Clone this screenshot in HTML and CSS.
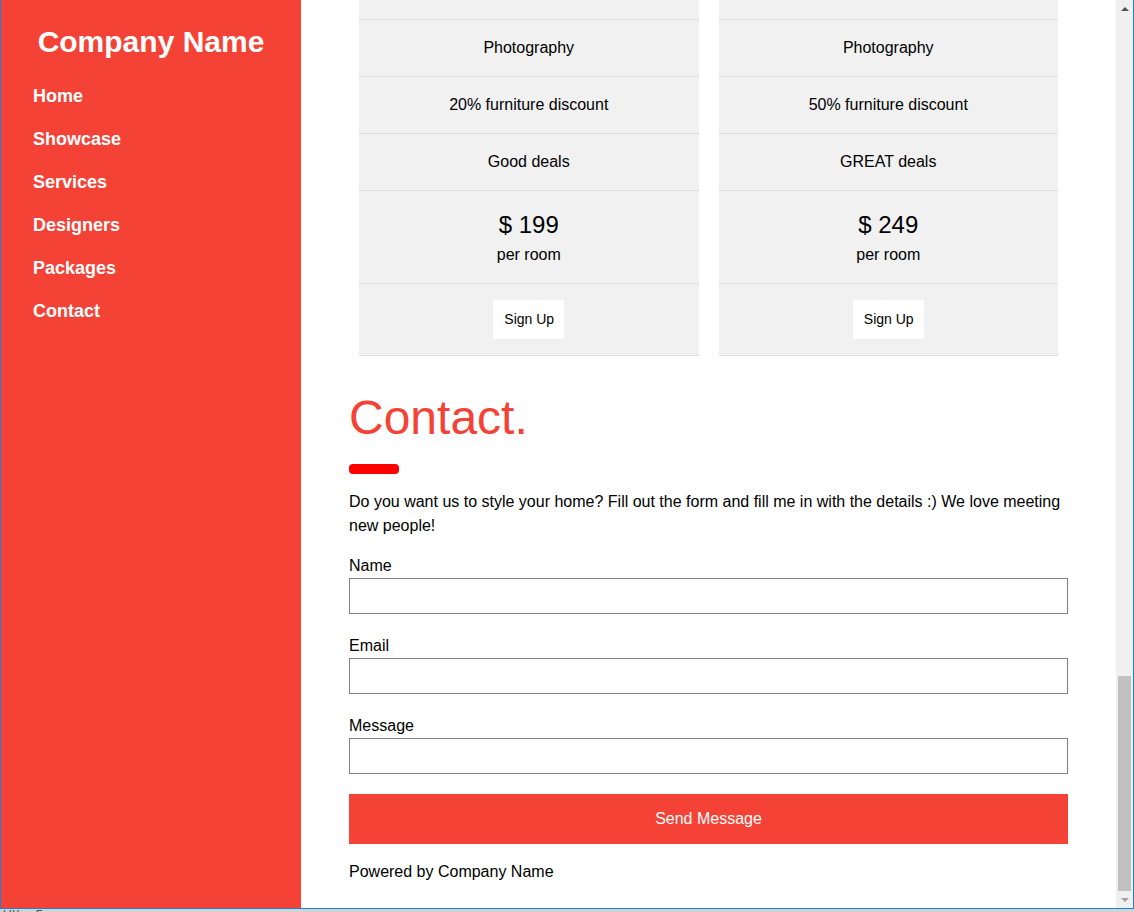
FILE: index.html
```html
<!DOCTYPE html>
<html lang="en">
<head>
<meta charset="utf-8">
<title>Interior Design</title>
<link rel="stylesheet" href="styles.css">
</head>
<body>
<div class="screen">
  <div class="window">
    <nav class="sidebar">
      <h3 class="brand">Company Name</h3>
      <a class="nav-item" href="#">Home</a>
      <a class="nav-item" href="#">Showcase</a>
      <a class="nav-item" href="#">Services</a>
      <a class="nav-item" href="#">Designers</a>
      <a class="nav-item" href="#">Packages</a>
      <a class="nav-item" href="#">Contact</a>
    </nav>
    <main class="main">
      <div class="pricing">
        <div class="col">
          <ul class="card">
            <li class="row row-partial"></li>
            <li class="row">Photography</li>
            <li class="row">20% furniture discount</li>
            <li class="row">Good deals</li>
            <li class="row"><h2 class="price">$ 199</h2><span>per room</span></li>
            <li class="row"><button class="signup">Sign Up</button></li>
          </ul>
        </div>
        <div class="col">
          <ul class="card">
            <li class="row row-partial"></li>
            <li class="row">Photography</li>
            <li class="row">50% furniture discount</li>
            <li class="row">GREAT deals</li>
            <li class="row"><h2 class="price">$ 249</h2><span>per room</span></li>
            <li class="row"><button class="signup">Sign Up</button></li>
          </ul>
        </div>
      </div>
      <section class="contact">
        <h1 class="contact-title">Contact.</h1>
        <div class="divider"></div>
        <p class="intro">Do you want us to style your home? Fill out the form and fill me in with the details :) We love meeting new people!</p>
        <form class="form">
          <div class="field">
            <label>Name</label>
            <input type="text">
          </div>
          <div class="field">
            <label>Email</label>
            <input type="text">
          </div>
          <div class="field">
            <label>Message</label>
            <input type="text">
          </div>
          <button type="button" class="send">Send Message</button>
        </form>
        <p class="powered">Powered by Company Name</p>
      </section>
    </main>
    <div class="scrollbar">
      <div class="sb-btn"><span class="arrow-up"></span></div>
      <div class="sb-track"><div class="sb-thumb"></div></div>
      <div class="sb-btn"><span class="arrow-down"></span></div>
    </div>
  </div>
  <div class="taskbar"><span class="tb-a">UX</span><span class="tb-b">Главная панель</span></div>
</div>
</body>
</html>
```
FILE: styles.css
```css
* { box-sizing: border-box; }
html, body { margin: 0; padding: 0; overflow: hidden; }
body {
  font-family: "Liberation Sans", Arial, sans-serif;
  font-size: 16px;
  line-height: 1.5;
  color: #000;
}
.screen {
  width: 1134px;
  height: 912px;
  display: flex;
  flex-direction: column;
  background: #d2d2d2;
}
.window {
  height: 909px;
  flex: none;
  display: flex;
  background: #fff;
  border-left: 1px solid #1883d7;
  border-right: 1px solid #1883d7;
  border-bottom: 1px solid #1883d7;
}
.sidebar {
  width: 300px;
  flex: none;
  background: #f44336;
  color: #fff;
  padding: 0 16px;
}
.brand {
  margin: 19px 0 11px;
  font-size: 30px;
  line-height: 45px;
  font-weight: bold;
  text-align: center;
}
.nav-item {
  display: block;
  padding: 8px 16px;
  font-size: 18px;
  line-height: 27px;
  font-weight: bold;
  color: #fff;
  text-decoration: none;
}
.main {
  flex: 1;
  min-width: 0;
  overflow: hidden;
  padding: 0 48px;
}
.pricing {
  display: grid;
  grid-template-columns: 1fr 1fr;
}
.col { padding: 0 10px; }
.card {
  list-style: none;
  margin: 0;
  padding: 0;
  background: #f1f1f1;
  text-align: center;
}
.row {
  padding: 16px;
  border-bottom: 1px solid #ddd;
}
.row-partial {
  height: 20px;
  padding: 0;
}
.price {
  margin: 0;
  font-size: 24px;
  line-height: 36px;
  font-weight: normal;
}
.signup {
  display: inline-block;
  font-family: "Liberation Sans", Arial, sans-serif;
  font-size: 14px;
  line-height: 23px;
  padding: 8px 10px 8px 11px;
  background: #fff;
  color: #000;
  border: 0;
}
.contact-title {
  margin: 33px 0 0;
  font-size: 48px;
  line-height: 58px;
  font-weight: normal;
  color: #f44336;
}
.divider {
  width: 50px;
  height: 10px;
  margin-top: 17px;
  background: #f00;
  border-radius: 4px;
}
.intro { margin: 16px 0 0; }
.form { margin: 0; }
.field { margin-top: 20px; }
.field:first-child { margin-top: 16px; }
.field label {
  display: block;
  line-height: 24px;
}
.field input {
  display: block;
  width: 100%;
  height: 36px;
  margin: 0;
  padding: 8px;
  border: 1px solid #808080;
  font-family: "Liberation Sans", Arial, sans-serif;
  font-size: 16px;
}
.send {
  display: block;
  width: 100%;
  height: 50px;
  margin-top: 20px;
  background: #f44336;
  color: #fff;
  border: 0;
  font-family: "Liberation Sans", Arial, sans-serif;
  font-size: 16px;
}
.powered { margin: 16px 0 0; }
.scrollbar {
  width: 17px;
  flex: none;
  display: flex;
  flex-direction: column;
  background: #f0f0f0;
}
.sb-btn {
  height: 17px;
  flex: none;
  display: flex;
  align-items: center;
  justify-content: center;
}
.arrow-up {
  width: 0;
  height: 0;
  border-left: 4px solid transparent;
  border-right: 4px solid transparent;
  border-bottom: 4px solid #505050;
}
.arrow-down {
  width: 0;
  height: 0;
  border-left: 4px solid transparent;
  border-right: 4px solid transparent;
  border-top: 4px solid #a3a3a3;
}
.sb-track {
  flex: 1;
  display: flex;
  flex-direction: column;
  justify-content: flex-end;
  padding: 0 2px;
}
.sb-thumb {
  height: 215px;
  background: #c1c1c1;
}
.taskbar {
  flex: 1;
  overflow: hidden;
  display: flex;
  font-size: 12px;
  line-height: 12px;
  color: #555;
  padding-left: 3px;
}
.tb-b { margin-left: 16px; }
```
